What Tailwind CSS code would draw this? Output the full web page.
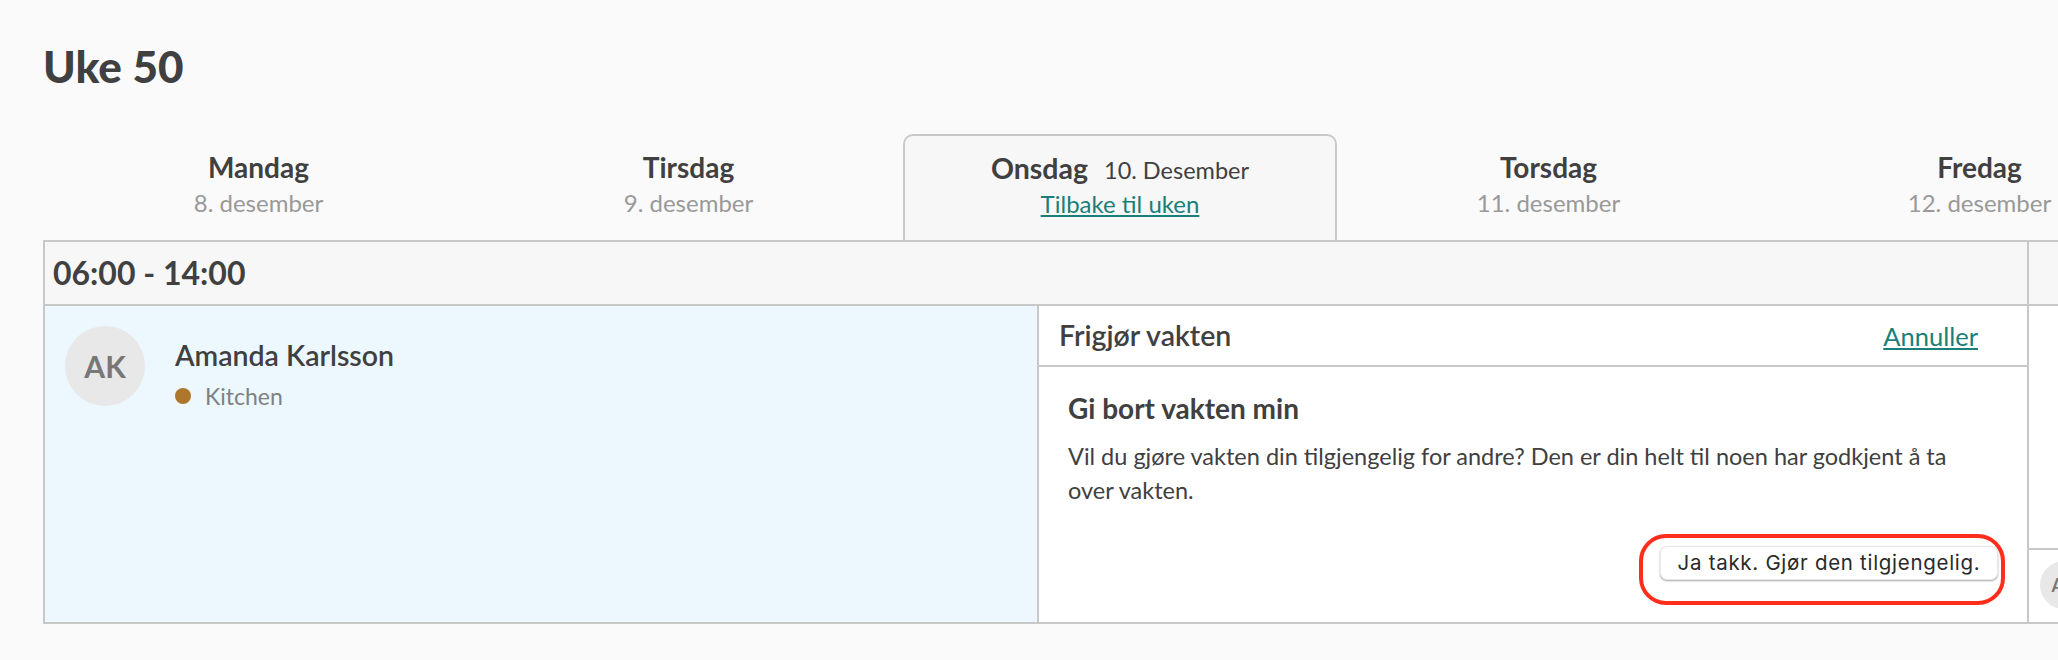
<!DOCTYPE html>
<html lang="no">
<head>
<meta charset="utf-8">
<title>Uke 50</title>
<script src="https://cdn.jsdelivr.net/npm/@tailwindcss/browser@4"></script>
</head>
<body class="m-0 bg-[#fafafa]">
<div class="w-[2058px] h-[660px] overflow-hidden bg-[#fafafa] text-[#404040] font-['Lato','Liberation_Sans',sans-serif]">
  <div class="pl-[43px]">
    <h1 class="h-[134px] pt-[42px] text-[44px] leading-[48px] font-black m-0">Uke 50</h1>

    <div class="flex w-[2200px] h-[106px]">
      <div class="w-[431px] shrink-0 pt-[15px] text-center">
        <div class="text-[28px] leading-[36px] font-bold">Mandag</div>
        <div class="text-[24px] leading-[36px] text-[#999999]">8. desember</div>
      </div>
      <div class="w-[431px] shrink-0 pt-[15px] text-center ml-[-1px]">
        <div class="text-[28px] leading-[36px] font-bold">Tirsdag</div>
        <div class="text-[24px] leading-[36px] text-[#999999]">9. desember</div>
      </div>
      <div class="w-[434px] ml-[-1px] shrink-0 pt-[14px] text-center bg-[#f7f7f7] border-2 border-b-0 border-[#c8c8c8] rounded-t-[10px]">
        <div class="flex justify-center items-baseline gap-[16px] h-[36px]">
          <span class="text-[28.5px] leading-[36px] font-bold">Onsdag</span>
          <span class="text-[23.5px] leading-[36px]">10. Desember</span>
        </div>
        <a class="block text-[24px] leading-[36px] text-[#1a7f78] underline">Tilbake til uken</a>
      </div>
      <div class="w-[431px] shrink-0 pt-[15px] text-center ml-[-4px]">
        <div class="text-[28px] leading-[36px] font-bold">Torsdag</div>
        <div class="text-[24px] leading-[36px] text-[#999999]">11. desember</div>
      </div>
      <div class="w-[431px] shrink-0 pt-[15px] text-center">
        <div class="text-[28px] leading-[36px] font-bold">Fredag</div>
        <div class="text-[24px] leading-[36px] text-[#999999]">12. desember</div>
      </div>
    </div>

    <div class="flex w-[2015px] h-[384px] border-y-2 border-[#c8c8c8] relative">
      <div class="w-[1986px] shrink-0 flex flex-col border-x-2 border-[#c8c8c8]">
        <div class="h-[64px] shrink-0 bg-[#f7f7f7] border-b-2 border-[#c8c8c8] pl-[8px] flex items-center text-[32px] font-bold">06:00 - 14:00</div>
        <div class="flex flex-1">
          <div class="w-[994px] shrink-0 bg-[#ecf7fe] flex pl-[20px] pt-[20px] gap-[30px] border-r-2 border-[#c8c8c8]">
            <div class="w-[80px] h-[80px] rounded-full bg-[#e8e8e8] text-[#777777] text-[30px] font-bold flex items-center justify-center">AK</div>
            <div>
              <div class="text-[28.5px] leading-[36px] mt-[11px] font-semibold">Amanda Karlsson</div>
              <div class="flex items-center gap-[14px] mt-[8px]">
                <span class="w-[16px] h-[16px] rounded-full bg-[#ae772b]"></span>
                <span class="text-[23px] leading-[30px] text-[#808080]">Kitchen</span>
              </div>
            </div>
          </div>
          <div class="flex-1 bg-white flex flex-col min-w-0">
            <div class="h-[61px] shrink-0 border-b-2 border-[#c8c8c8] flex items-center justify-between pl-[20px] pr-[49px]">
              <span class="text-[28.5px] font-semibold">Frigjør vakten</span>
              <a class="text-[25.5px] mt-[1px] text-[#1a7f78] underline">Annuller</a>
            </div>
            <div class="flex-1 pl-[29px] pr-[30px] pt-[23px] flex flex-col">
              <h2 class="text-[28px] leading-[36px] font-bold m-0">Gi bort vakten min</h2>
              <p class="text-[23.5px] leading-[34px] mt-[13px] mb-0 text-[#404040] w-[905px]">Vil du gjøre vakten din tilgjengelig for andre? Den er din helt til noen har godkjent å ta over vakten.</p>
              <div class="flex justify-end mt-[39px] mr-[-1px]">
                <button class="h-[34px] w-[338px] rounded-[7px] bg-white border border-[#e8e8e8] shadow-[0_1px_2px_rgba(0,0,0,0.35)] font-['Inter',sans-serif] text-[20.5px] leading-[32px] tracking-[0.7px] text-[#2a2a2a] flex items-center justify-center">Ja takk. Gjør den tilgjengelig.</button>
              </div>
            </div>
          </div>
        </div>
      </div>
      <div class="flex-1 flex flex-col">
        <div class="h-[64px] shrink-0 bg-[#f7f7f7] border-b-2 border-[#c8c8c8]"></div>
        <div class="h-[244px] shrink-0 bg-white border-b-2 border-[#c8c8c8]"></div>
        <div class="flex-1 bg-white pl-[11px] pt-[11px] overflow-hidden">
          <div class="w-[48px] h-[48px] rounded-full bg-[#e8e8e8] text-[#777777] text-[18px] font-bold flex items-center justify-center">AK</div>
        </div>
      </div>
      <div class="absolute left-[1596px] top-[292px] w-[366px] h-[71px] border-[4px] border-[#ff2d1c] rounded-[27px]"></div>
    </div>
  </div>
</div>
</body>
</html>
